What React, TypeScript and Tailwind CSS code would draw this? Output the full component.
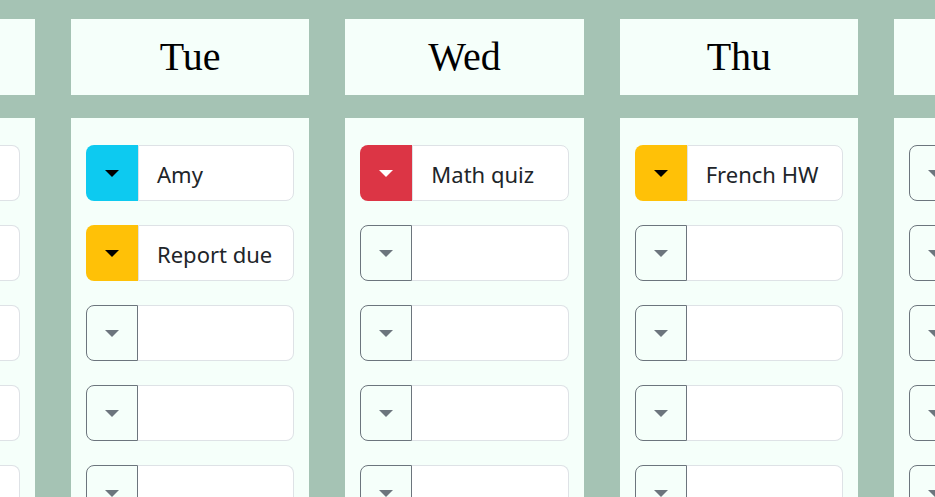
import React from 'react';

type Item = { text: string; color: 'info' | 'warning' | 'danger' } | null;

const days: { name: string; items: Item[] }[] = [
  { name: 'Mon', items: [null, null, null, null, null] },
  {
    name: 'Tue',
    items: [
      { text: 'Amy', color: 'info' },
      { text: 'Report due', color: 'warning' },
      null,
      null,
      null,
    ],
  },
  { name: 'Wed', items: [{ text: 'Math quiz', color: 'danger' }, null, null, null, null] },
  { name: 'Thu', items: [{ text: 'French HW', color: 'warning' }, null, null, null, null] },
  { name: 'Fri', items: [null, null, null, null, null] },
];

const buttonBg = {
  info: 'bg-[#0dcaf0]',
  warning: 'bg-[#ffc107]',
  danger: 'bg-[#dc3545]',
};

const caretColor = {
  info: 'border-t-black',
  warning: 'border-t-black',
  danger: 'border-t-white',
};

const Caret = ({ className }: { className: string }) => (
  <span className={`block w-0 h-0 border-t-[7px] border-x-[7px] border-x-transparent ${className}`} />
);

const Row = ({ item }: { item: Item }) => (
  <div className="flex h-[56px] shrink-0">
    {item ? (
      <div className={`w-[52px] shrink-0 rounded-l-[8px] flex items-center justify-center ${buttonBg[item.color]}`}>
        <Caret className={caretColor[item.color]} />
      </div>
    ) : (
      <div className="w-[52px] shrink-0 rounded-l-[8px] border border-[#6c757d] flex items-center justify-center">
        <Caret className="border-t-[#6c757d]" />
      </div>
    )}
    <div
      className={`flex-1 bg-white rounded-r-[8px] border border-[#dee2e6] flex items-center pl-[18px] pt-[2px] text-[22px] text-[#212529] ${
        item ? '' : 'border-l-0'
      }`}
      style={{ fontFamily: '"Noto Sans", sans-serif' }}
    >
      {item?.text}
    </div>
  </div>
);

const App = () => {
  return (
    <div className="w-[935px] h-[497px] overflow-hidden bg-[#a5c3b4]">
      <div className="flex gap-[36px] ml-[-203.3px] pt-[19px]">
        {days.map((day) => (
          <div key={day.name} className="w-[238.33px] shrink-0 flex flex-col">
            <div className="h-[76px] bg-[#f5fffa] flex items-center justify-center">
              <h2
                className="text-[40px] text-black leading-none pb-[1px]"
                style={{ fontFamily: '"Liberation Serif", serif' }}
              >
                {day.name}
              </h2>
            </div>
            <div className="mt-[23px] bg-[#f5fffa] px-[15px] pt-[27px] pb-[24px] flex flex-col gap-[24px]">
              {day.items.map((item, i) => (
                <Row key={i} item={item} />
              ))}
            </div>
          </div>
        ))}
      </div>
    </div>
  );
};

export default App;
